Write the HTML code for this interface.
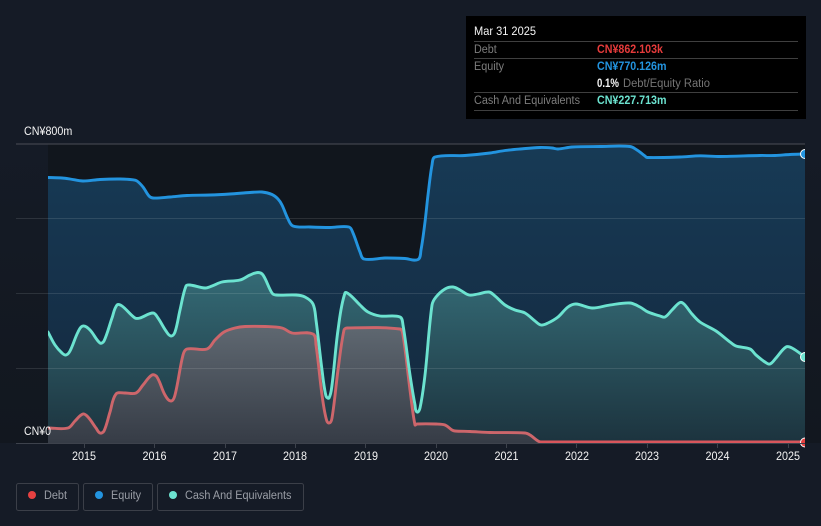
<!DOCTYPE html>
<html><head><meta charset="utf-8"><style>
html,body{margin:0;padding:0;background:#151b26;width:821px;height:526px;overflow:hidden}
svg{display:block}
text{font-family:"Liberation Sans","Noto Sans CJK SC",sans-serif}
</style></head><body>
<svg width="821" height="526" viewBox="0 0 821 526" xmlns="http://www.w3.org/2000/svg">
<defs>
<linearGradient id="bg" gradientUnits="userSpaceOnUse" x1="0" y1="144" x2="0" y2="443"><stop offset="0" stop-color="#151b26"/><stop offset="1" stop-color="#12171f"/></linearGradient>
<linearGradient id="eq" gradientUnits="userSpaceOnUse" x1="0" y1="150" x2="0" y2="443"><stop offset="0" stop-color="#173a55"/><stop offset=".6" stop-color="#152f47"/><stop offset="1" stop-color="#14293b"/></linearGradient>
<linearGradient id="ca" gradientUnits="userSpaceOnUse" x1="0" y1="275" x2="0" y2="443"><stop offset="0" stop-color="#346a75"/><stop offset="1" stop-color="#1c333e"/></linearGradient>
<linearGradient id="de" gradientUnits="userSpaceOnUse" x1="0" y1="326" x2="0" y2="443"><stop offset="0" stop-color="#5f6871"/><stop offset="1" stop-color="#363c46"/></linearGradient>
<clipPath id="c"><rect x="48" y="140" width="757" height="304"/></clipPath>
<clipPath id="d"><rect x="790" y="140" width="15" height="310"/></clipPath>
</defs>
<rect x="0" y="144" width="821" height="299" fill="url(#bg)"/>
<rect x="48" y="144" width="757" height="299" fill="#11161d"/>
<g clip-path="url(#c)">
<polygon class="s" fill="url(#eq)" points="48,177.5 62,178 70,179 83,181 100,179.5 120,179 133,179.8 137,181 143,187 149,196 153,198 170,197 187,195.5 210,195 230,194 250,192.5 262,192 272,194.5 278,199 282,205 288,219 293,226 310,227 330,227.5 349,227 353,233 360,252 364,259 385,258 405,258.5 418,259.5 421,250 425,222 428,195 432,165 435,157 465,155.5 490,153 505,150.5 520,149 540,147.5 552,148 558,149 572,147 600,146.5 630,146.5 637,150 645,156 647,157.5 680,157 700,155.8 720,156.5 760,155.5 775,155.5 790,154.5 805,154 805,443 48,443"/>
<polygon class="s" fill="url(#ca)" points="48,332 55,345 62,353 66,355 70,351 78,332 83,326 90,330 100,343 104,341 112,318 117,305 122,306 135,318 140,318 153,313 158,318 166,331 171,336 175,332 180,310 186,286 190,285 205,288 212,286 222,282 240,280 250,275 258,272.5 263,275 272,293 276,295 296,295 305,297 313,304 316,320 322,370 326,396 329,398 332,385 338,330 345,293 350,295 360,305 368,312 380,316 400,317 403,325 410,375 415,405 417,412 420,408 425,375 432,305 436,297 445,289 453,287 460,290 469,295 478,294 489,292 495,296 505,305 515,310 525,313 535,321 541,325 548,323 558,317 568,307 576,304 592,308 610,305 630,303 640,307 648,312 660,316 665,317 672,310 680,302.5 684,304 692,314 700,322 716,331 730,342 736,346 750,349 756,355 765,362 770,364 776,358 786,347 792,348 805,357 805,443 48,443"/>
<polygon class="s" fill="url(#de)" points="48,428 68,428 75,421 83,414 88,417 96,428 100,433 104,431 110,412 116,394 125,393 136,393 143,385 152,375 157,377 165,395 171,401 175,395 183,355 187,349 207,349 215,340 224,332 235,328 245,326.5 265,326.5 282,328 292,333 313,334 316,345 322,395 326,418 329,423 332,418 338,370 344,330 347,328 400,329 403,335 410,390 415,425 417,424 436,424 445,425 452,430 455,431 470,431.5 490,432.5 525,433 530,435 538,441 541,442 805,442 805,443 48,443"/>
</g>
<g stroke="#ffffff" stroke-opacity=".11" stroke-width="1">
<line x1="16" y1="218.5" x2="805" y2="218.5"/><line x1="16" y1="293.5" x2="805" y2="293.5"/><line x1="16" y1="368.5" x2="805" y2="368.5"/>
</g>
<line x1="16" y1="144" x2="805" y2="144" stroke="#4b4e56" stroke-width="1"/>
<g clip-path="url(#c)" fill="none" stroke-width="2.9" stroke-linejoin="round" stroke-linecap="round">
<polyline class="s" stroke="#cd666b" points="48,428 68,428 75,421 83,414 88,417 96,428 100,433 104,431 110,412 116,394 125,393 136,393 143,385 152,375 157,377 165,395 171,401 175,395 183,355 187,349 207,349 215,340 224,332 235,328 245,326.5 265,326.5 282,328 292,333 313,334 316,345 322,395 326,418 329,423 332,418 338,370 344,330 347,328 400,329 403,335 410,390 415,425 417,424 436,424 445,425 452,430 455,431 470,431.5 490,432.5 525,433 530,435 538,441 541,442 805,442"/>
<polyline stroke="#d9565c" points="541,442 805,442"/>
<polyline class="s" stroke="#2394df" points="48,177.5 62,178 70,179 83,181 100,179.5 120,179 133,179.8 137,181 143,187 149,196 153,198 170,197 187,195.5 210,195 230,194 250,192.5 262,192 272,194.5 278,199 282,205 288,219 293,226 310,227 330,227.5 349,227 353,233 360,252 364,259 385,258 405,258.5 418,259.5 421,250 425,222 428,195 432,165 435,157 465,155.5 490,153 505,150.5 520,149 540,147.5 552,148 558,149 572,147 600,146.5 630,146.5 637,150 645,156 647,157.5 680,157 700,155.8 720,156.5 760,155.5 775,155.5 790,154.5 805,154"/>
<polyline class="s" stroke="#6ce3d0" points="48,332 55,345 62,353 66,355 70,351 78,332 83,326 90,330 100,343 104,341 112,318 117,305 122,306 135,318 140,318 153,313 158,318 166,331 171,336 175,332 180,310 186,286 190,285 205,288 212,286 222,282 240,280 250,275 258,272.5 263,275 272,293 276,295 296,295 305,297 313,304 316,320 322,370 326,396 329,398 332,385 338,330 345,293 350,295 360,305 368,312 380,316 400,317 403,325 410,375 415,405 417,412 420,408 425,375 432,305 436,297 445,289 453,287 460,290 469,295 478,294 489,292 495,296 505,305 515,310 525,313 535,321 541,325 548,323 558,317 568,307 576,304 592,308 610,305 630,303 640,307 648,312 660,316 665,317 672,310 680,302.5 684,304 692,314 700,322 716,331 730,342 736,346 750,349 756,355 765,362 770,364 776,358 786,347 792,348 805,357"/>
</g>
<g clip-path="url(#d)" stroke="#ffffff" stroke-width="1">
<circle cx="805" cy="154" r="4.5" fill="#2394df"/>
<circle cx="805" cy="357" r="4.5" fill="#6ce3d0"/>
<circle cx="805" cy="442.5" r="4.5" fill="#e64141"/>
</g>
<line x1="16" y1="443.5" x2="805" y2="443.5" stroke="#3d424c" stroke-width="1"/>
<g stroke="#3d424c" stroke-width="1">
<line x1="84.5" y1="444" x2="84.5" y2="448"/><line x1="154.5" y1="444" x2="154.5" y2="448"/><line x1="225.5" y1="444" x2="225.5" y2="448"/><line x1="295.5" y1="444" x2="295.5" y2="448"/><line x1="365.5" y1="444" x2="365.5" y2="448"/><line x1="436.5" y1="444" x2="436.5" y2="448"/><line x1="506.5" y1="444" x2="506.5" y2="448"/><line x1="576.5" y1="444" x2="576.5" y2="448"/><line x1="647.5" y1="444" x2="647.5" y2="448"/><line x1="717.5" y1="444" x2="717.5" y2="448"/><line x1="788.5" y1="444" x2="788.5" y2="448"/>
</g>
<g fill="#f4f4f4" font-size="11.5" text-anchor="middle">
<text x="84" y="460" textLength="24" lengthAdjust="spacingAndGlyphs">2015</text><text x="154.5" y="460" textLength="24" lengthAdjust="spacingAndGlyphs">2016</text><text x="225" y="460" textLength="24" lengthAdjust="spacingAndGlyphs">2017</text><text x="295" y="460" textLength="24" lengthAdjust="spacingAndGlyphs">2018</text><text x="366" y="460" textLength="24" lengthAdjust="spacingAndGlyphs">2019</text><text x="436" y="460" textLength="24" lengthAdjust="spacingAndGlyphs">2020</text><text x="506.5" y="460" textLength="24" lengthAdjust="spacingAndGlyphs">2021</text><text x="577" y="460" textLength="24" lengthAdjust="spacingAndGlyphs">2022</text><text x="647" y="460" textLength="24" lengthAdjust="spacingAndGlyphs">2023</text><text x="717.5" y="460" textLength="24" lengthAdjust="spacingAndGlyphs">2024</text><text x="788" y="460" textLength="24" lengthAdjust="spacingAndGlyphs">2025</text>
</g>
<text x="24" y="135" fill="#f4f4f4" font-size="11.5" textLength="48.3" lengthAdjust="spacingAndGlyphs">CN¥800m</text>
<text x="24" y="435" fill="#f4f4f4" font-size="11.5" textLength="27" lengthAdjust="spacingAndGlyphs">CN¥0</text>
<rect x="466" y="16" width="340" height="103" fill="#000"/>
<g stroke="#3f3f3f" stroke-width="1">
<line x1="474" y1="41.5" x2="798" y2="41.5"/><line x1="474" y1="58.5" x2="798" y2="58.5"/><line x1="474" y1="92.5" x2="798" y2="92.5"/><line x1="474" y1="110.5" x2="798" y2="110.5"/>
</g>
<text x="474" y="35" fill="#f4f4f4" font-size="12" textLength="62" lengthAdjust="spacingAndGlyphs">Mar 31 2025</text>
<g font-size="11.5" fill="#7d7d7d">
<text x="474" y="53" textLength="22.7" lengthAdjust="spacingAndGlyphs">Debt</text><text x="474" y="70" textLength="30" lengthAdjust="spacingAndGlyphs">Equity</text><text x="474" y="104" textLength="106" lengthAdjust="spacingAndGlyphs">Cash And Equivalents</text>
<text x="623" y="87" fill="#757575" textLength="87" lengthAdjust="spacingAndGlyphs">Debt/Equity Ratio</text>
</g>
<g font-size="11.5" font-weight="bold">
<text x="597" y="53" fill="#e63b3b" textLength="66" lengthAdjust="spacingAndGlyphs">CN¥862.103k</text>
<text x="597" y="70" fill="#2394df" textLength="69.5" lengthAdjust="spacingAndGlyphs">CN¥770.126m</text>
<text x="597" y="87" fill="#f4f4f4" textLength="22" lengthAdjust="spacingAndGlyphs">0.1%</text>
<text x="597" y="104" fill="#6ce3d0" textLength="69.5" lengthAdjust="spacingAndGlyphs">CN¥227.713m</text>
</g>
<g fill="none" stroke="#3b3f48" stroke-width="1">
<rect x="16.5" y="483.5" width="62" height="27" rx="2"/>
<rect x="83.5" y="483.5" width="69" height="27" rx="2"/>
<rect x="157.5" y="483.5" width="146" height="27" rx="2"/>
</g>
<circle cx="32" cy="495" r="4" fill="#e64141"/>
<circle cx="99" cy="495" r="4" fill="#2394df"/>
<circle cx="173" cy="495" r="4" fill="#6ce3d0"/>
<g fill="#9a9ea6" font-size="11.5">
<text x="44" y="499" textLength="23" lengthAdjust="spacingAndGlyphs">Debt</text><text x="111" y="499" textLength="30" lengthAdjust="spacingAndGlyphs">Equity</text><text x="185" y="499" textLength="106.5" lengthAdjust="spacingAndGlyphs">Cash And Equivalents</text>
</g>
</svg>
<script>
document.querySelectorAll('.s').forEach(function(el){
  var n=el.getAttribute('points').trim().split(/\s+/).map(function(p){return p.split(',').map(Number)});
  var poly=el.tagName.toLowerCase()==='polygon',tail=[];
  if(poly){tail=n.slice(-2);n=n.slice(0,-2);}
  function u(p,q){var x=q[0]-p[0],y=q[1]-p[1],l=Math.sqrt(x*x+y*y)||1;return [x/l,y/l];}
  var k=0.33,d='M'+n[0][0]+' '+n[0][1];
  for(var i=0;i<n.length-1;i++){
    var a=n[Math.max(i-1,0)],b=n[i],c=n[i+1],e=n[Math.min(i+2,n.length-1)];
    var s=u(b,c),L=Math.sqrt(Math.pow(c[0]-b[0],2)+Math.pow(c[1]-b[1],2));
    var m1=u(a,c),m2=u(b,e);
    d+='C'+(b[0]+m1[0]*L*k).toFixed(2)+' '+(b[1]+m1[1]*L*k).toFixed(2)+' '+(c[0]-m2[0]*L*k).toFixed(2)+' '+(c[1]-m2[1]*L*k).toFixed(2)+' '+c[0]+' '+c[1];
  }
  if(poly){d+='L'+tail[0].join(' ')+'L'+tail[1].join(' ')+'Z';}
  var p=document.createElementNS('http://www.w3.org/2000/svg','path');
  p.setAttribute('d',d);
  ['fill','stroke'].forEach(function(x){if(el.hasAttribute(x))p.setAttribute(x,el.getAttribute(x));});
  el.parentNode.replaceChild(p,el);
});
</script>
</body></html>
